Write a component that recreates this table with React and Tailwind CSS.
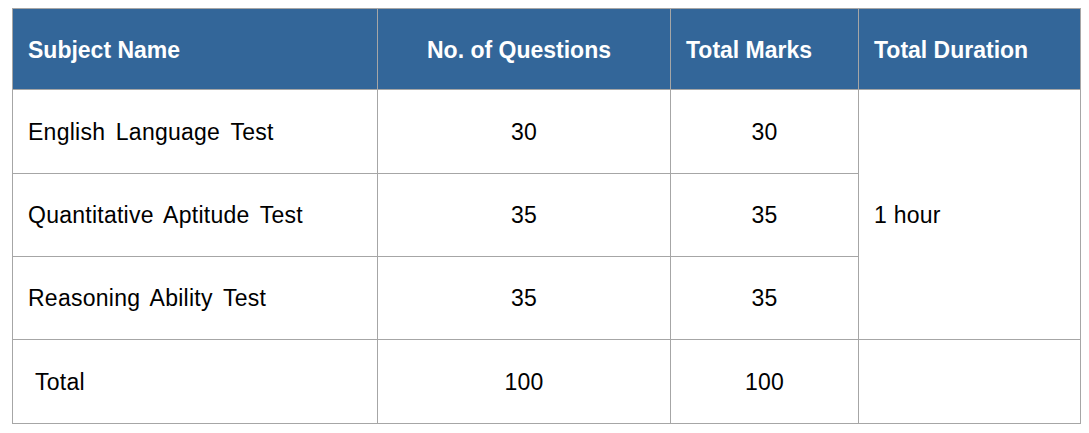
export default function App() {
  const head = "bg-[#336699] text-white font-bold border-r border-b border-[#a6a6a6] flex items-center pt-[3px]";
  const cell = "border-r border-b border-[#a6a6a6] flex items-center text-black pt-[1px] tracking-[0.25px]";
  return (
    <div className="pl-[12px] pt-[8px] bg-white w-[1089px] h-[433px]" style={{ fontFamily: '"Liberation Sans", Arial, sans-serif' }}>
      <div className="grid grid-cols-[365px_293px_188px_222px] grid-rows-[81px_84px_83px_83px_84px] border-l border-t border-[#a6a6a6] w-max text-[23px] leading-none">
        <div className={`${head} pl-[15px]`}>Subject Name</div>
        <div className={`${head} justify-center pr-[10px]`}>No. of Questions</div>
        <div className={`${head} pl-[15px]`}>Total Marks</div>
        <div className={`${head} pl-[15px]`}>Total Duration</div>

        <div className={`${cell} pl-[15px] [word-spacing:4px]`}>English Language Test</div>
        <div className={`${cell} justify-center`}>30</div>
        <div className={`${cell} justify-center`}>30</div>
        <div className={`${cell} pl-[15px] row-span-3`}>1 hour</div>

        <div className={`${cell} pl-[15px] [word-spacing:4px]`}>Quantitative Aptitude Test</div>
        <div className={`${cell} justify-center`}>35</div>
        <div className={`${cell} justify-center`}>35</div>

        <div className={`${cell} pl-[15px] [word-spacing:4px]`}>Reasoning Ability Test</div>
        <div className={`${cell} justify-center`}>35</div>
        <div className={`${cell} justify-center`}>35</div>

        <div className={`${cell} pl-[22px]`}>Total</div>
        <div className={`${cell} justify-center`}>100</div>
        <div className={`${cell} justify-center`}>100</div>
        <div className={cell}></div>
      </div>
    </div>
  );
}
